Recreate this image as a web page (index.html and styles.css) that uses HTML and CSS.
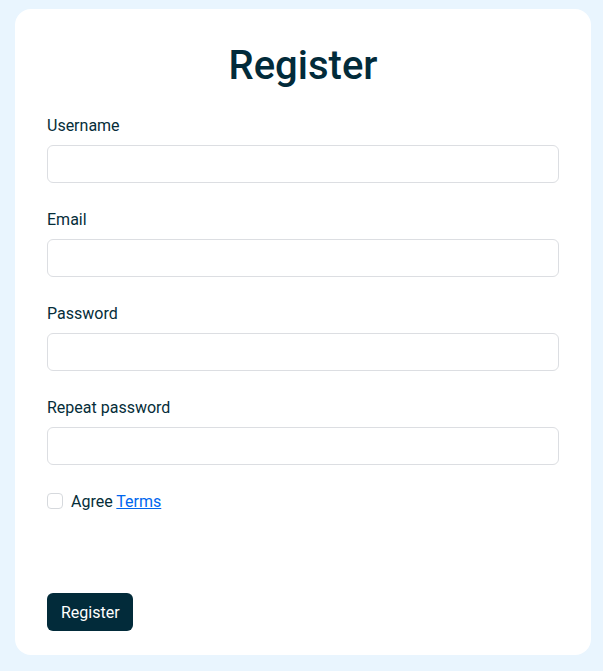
FILE: index.html
```html
<!DOCTYPE html>
<html lang="en">
<head>
    <meta charset="UTF-8">
    <meta name="viewport" content="width=device-width, initial-scale=1.0">
    <title>Register</title>
    <link rel="stylesheet" href="styles.css">
</head>
<body>
    <div class="card">
        <h1>Register</h1>
        <form class="register-form">
            <div class="form-group">
                <label for="username">Username</label>
                <input type="text" id="username">
            </div>
            <div class="form-group">
                <label for="email">Email</label>
                <input type="email" id="email">
            </div>
            <div class="form-group">
                <label for="password">Password</label>
                <input type="password" id="password">
            </div>
            <div class="form-group">
                <label for="repeat">Repeat password</label>
                <input type="password" id="repeat">
            </div>
            <div class="agree">
                <input type="checkbox" id="agree" class="checkbox">
                <label for="agree">Agree <a href="#">Terms</a></label>
            </div>
            <button type="submit">Register</button>
        </form>
    </div>
</body>
</html>
```

FILE: styles.css
```css
body {
    font-family: Roboto, "Noto Sans", sans-serif;
    background-color: #e9f5fe;
    margin: 0;
    padding: 9px 12px 16px 15px;
    color: #052d39;
}
.card {
    background: white;
    border-radius: 16px;
    padding: 32px 32px 24px;
}
h1 {
    margin: 0 0 24px;
    padding-top: 1px;
    height: 47px;
    text-align: center;
    font-size: 40px;
    line-height: 48px;
    font-weight: 500;
    color: #022b3a;
}
.form-group {
    margin-bottom: 24px;
}
.form-group label {
    display: block;
    font-size: 16px;
    line-height: 24px;
    padding-top: 1px;
    margin-bottom: 7px;
}
.form-group input {
    display: block;
    width: 100%;
    height: 38px;
    box-sizing: border-box;
    border: 1px solid #dcdee2;
    border-radius: 6px;
    padding: 6px 12px;
    font-size: 16px;
    font-family: inherit;
}
.agree {
    display: flex;
    align-items: center;
    gap: 8px;
    font-size: 16px;
    line-height: 24px;
    margin-bottom: 80px;
}
.agree label {
    padding-top: 1px;
    height: 23px;
}
.checkbox {
    appearance: none;
    width: 16px;
    height: 16px;
    margin: 0;
    border: 1px solid #d6d9dd;
    border-radius: 4px;
    background: white;
}
.agree a {
    color: #0066ee;
}
button {
    background-color: #022b3a;
    color: white;
    border: none;
    border-radius: 6px;
    height: 38px;
    padding: 0 13px 0 14px;
    font-size: 16px;
    font-family: inherit;
    cursor: pointer;
}
```
